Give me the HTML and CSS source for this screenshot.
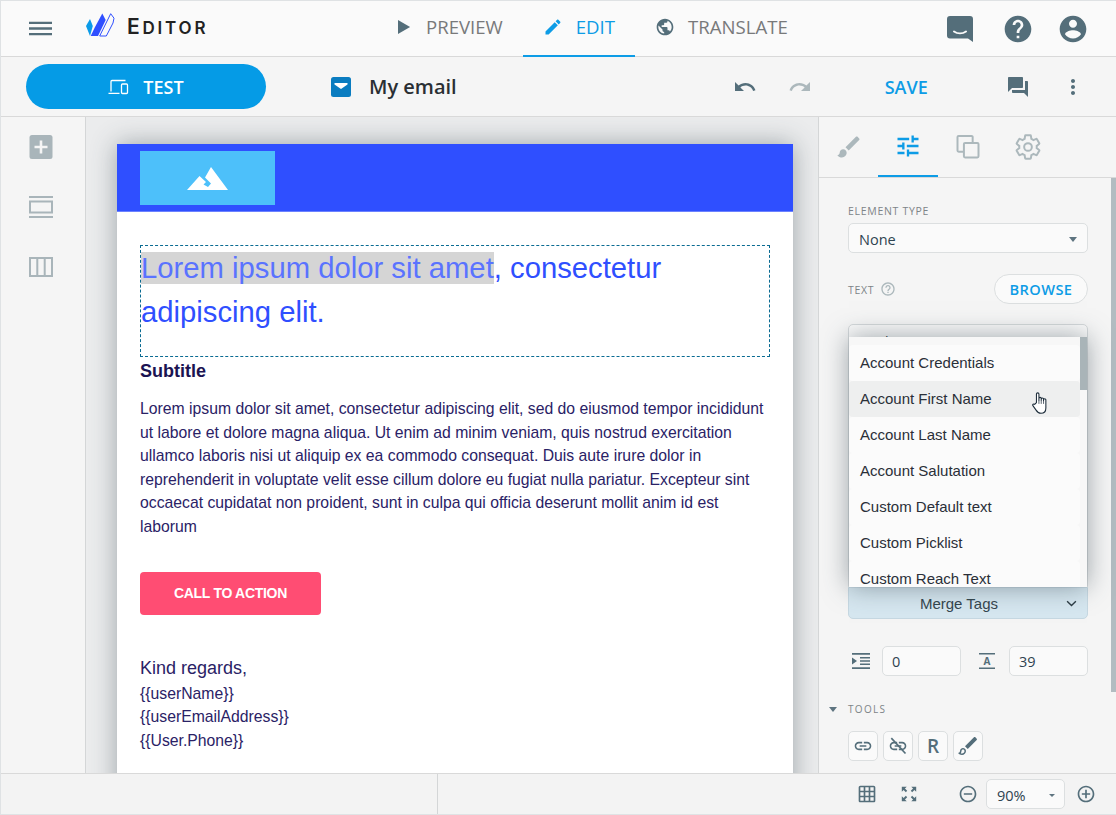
FILE: index.html
```html
<!DOCTYPE html>
<html lang="en">
<head>
<meta charset="utf-8">
<title>Editor</title>
<link rel="stylesheet" href="styles.css">
</head>
<body>
<div class="app">
  <header class="topbar">
    <div class="brand">
      <svg class="ic menu" viewBox="0 0 24 24"><path d="M0 19h24v-2.400H0zM0 13.200h24v-2.400H0zM0 5v2.400h24V5z"/></svg>
      <svg class="logo" viewBox="0 0 29 24"><path fill="#0a9be8" d="M0 13 4 6 6.800 13 4 23z"/><path fill="#2f4fff" d="M4.700 23 9 14 16.300 .5 19.700 7 12 23z"/><path fill="#fafafa" stroke="#2f4fff" d="M13.700 23 24.700 .7 28 5.200 27 10 20.300 23z"/></svg>
      <span class="logotext">Editor</span>
    </div>
    <nav class="tabs">
      <a class="tab"><svg class="ic i20" viewBox="0 0 24 24"><path d="M6 3.500v17l14.500-8.500z"/></svg>PREVIEW</a>
      <a class="tab active"><svg class="ic i20" viewBox="0 0 24 24"><path d="M3 17.250V21h3.750L17.810 9.940l-3.750-3.750L3 17.250zM20.710 7.040c.39-.39.39-1.020 0-1.410l-2.340-2.340c-.39-.39-1.020-.39-1.410 0l-1.830 1.830 3.750 3.750 1.830-1.830z"/></svg>EDIT</a>
      <a class="tab"><svg class="ic i20" viewBox="0 0 24 24"><path d="M12 2C6.480 2 2 6.480 2 12s4.480 10 10 10 10-4.480 10-10S17.520 2 12 2zm-1 17.930c-3.950-.49-7-3.850-7-7.930 0-.62.08-1.210.21-1.790L9 15v1c0 1.100.9 2 2 2v1.930zm6.900-2.540c-.26-.81-1-1.390-1.900-1.390h-1v-3c0-.55-.45-1-1-1H8v-2h2c.55 0 1-.45 1-1V7h2c1.100 0 2-.9 2-2v-.41c2.930 1.190 5 4.060 5 7.410 0 2.080-.8 3.970-2.100 5.390z"/></svg>TRANSLATE</a>
    </nav>
    <div class="topicons">
      <svg class="ic i27 chat" viewBox="0 0 26 27"><path d="M3 0h20a3 3 0 0 1 3 3v23l-5-3.500H3a3 3 0 0 1-3-3V3a3 3 0 0 1 3-3z"/><path fill="none" stroke="#fafafa" stroke-width="2" stroke-linecap="round" d="M7 15.500c3.500 2.400 8.500 2.400 12 0"/></svg>
      <svg class="ic i32" viewBox="0 0 24 24"><path d="M12 2C6.480 2 2 6.480 2 12s4.480 10 10 10 10-4.480 10-10S17.520 2 12 2zm1 17h-2v-2h2v2zm2.070-7.750l-.9.920C13.450 12.900 13 13.500 13 15h-2v-.5c0-1.100.45-2.100 1.170-2.830l1.240-1.260c.37-.36.59-.86.59-1.410 0-1.100-.9-2-2-2s-2 .9-2 2H8c0-2.210 1.790-4 4-4s4 1.790 4 4c0 .88-.36 1.680-.93 2.250z"/></svg>
      <svg class="ic i32" viewBox="0 0 24 24"><path d="M12 2C6.480 2 2 6.480 2 12s4.480 10 10 10 10-4.480 10-10S17.520 2 12 2zm0 3c1.660 0 3 1.340 3 3s-1.340 3-3 3-3-1.340-3-3 1.340-3 3-3zm0 14.200c-2.500 0-4.710-1.280-6-3.220.03-1.990 4-3.080 6-3.080 1.990 0 5.970 1.090 6 3.080-1.290 1.940-3.500 3.220-6 3.220z"/></svg>
    </div>
  </header>

  <div class="toolbar">
    <button class="testbtn"><svg class="devices" viewBox="0 0 20 16" fill="none" stroke="#fff" stroke-width="1.300"><path d="M2.500 12.500V2.500a1 1 0 0 1 1-1H17M0 14.300h11"/><rect x="13" y="5" width="6" height="9.500" rx="1"/></svg>TEST</button>
    <div class="docname">
      <svg class="mailic" viewBox="0 0 20 20"><rect width="20" height="20" rx="2.500" fill="#0a7cc0"/><path d="M3.500 6h13v1.500L10 12 3.500 7.500z" fill="#fff"/></svg>
      <span>My email</span>
    </div>
    <div class="actions">
      <svg class="ic i24 undo" viewBox="0 0 24 24"><path d="M12.500 8c-2.650 0-5.050.99-6.900 2.600L2 7v9h9l-3.620-3.620c1.390-1.160 3.160-1.880 5.120-1.880 3.540 0 6.550 2.310 7.600 5.500l2.370-.78C21.080 11.030 17.150 8 12.500 8z"/></svg>
      <svg class="ic i24 redo" viewBox="0 0 24 24"><path d="M18.400 10.600C16.550 8.990 14.150 8 11.500 8c-4.650 0-8.580 3.030-9.960 7.220L3.900 16c1.050-3.190 4.050-5.500 7.600-5.500 1.950 0 3.730.72 5.120 1.880L13 16h9V7l-3.600 3.600z"/></svg>
      <span class="save">SAVE</span>
      <svg class="ic i24 qa" viewBox="0 0 24 24"><path d="M21 6h-2v9H6v2c0 .55.45 1 1 1h11l4 4V7c0-.55-.45-1-1-1zm-4 6V3c0-.55-.45-1-1-1H3c-.55 0-1 .45-1 1v14l4-4h10c.55 0 1-.45 1-1z"/></svg>
      <svg class="ic i24 more" viewBox="0 0 24 24"><path d="M12 8c1.100 0 2-.9 2-2s-.9-2-2-2-2 .9-2 2 .9 2 2 2zm0 2c-1.100 0-2 .9-2 2s.9 2 2 2 2-.9 2-2-.9-2-2-2zm0 6c-1.100 0-2 .9-2 2s.9 2 2 2 2-.9 2-2-.9-2-2-2z"/></svg>
    </div>
  </div>

  <main class="workspace">
    <aside class="rail">
      <svg class="railic" viewBox="0 0 24 24"><rect x=".5" width="23" height="24" rx="2.500" fill="#a9b5ba"/><path d="M10.700 5.500h2.600v5.200h5.200v2.600h-5.200v5.200h-2.600v-5.200H5.500v-2.600h5.200z" fill="#f5f5f5"/></svg>
      <svg class="railic" viewBox="0 0 24 24"><path fill="#a9b5ba" d="M0 1h24v2H0zM0 21h24v2H0z"/><rect x="1" y="6.500" width="22" height="11" fill="none" stroke="#a9b5ba" stroke-width="2"/></svg>
      <svg class="railic" viewBox="0 0 24 24"><path fill="none" stroke="#a9b5ba" stroke-width="2" d="M1 3h22v18H1zM8.300 3v18M15.700 3v18"/></svg>
    </aside>

    <section class="canvas">
      <article class="email">
        <div class="emailhead">
          <div class="imgslot"><svg class="mount" viewBox="0 0 41 23"><path fill="#fff" d="M0 23 12.500 9l6.500 6-2.500 2.500L21 20 24 16.500 18 10.500 24 0l17 23z"/></svg></div>
        </div>
        <div class="emailbody">
          <h1 class="title"><span class="sel">Lorem ipsum dolor sit amet</span>, consectetur adipiscing elit.</h1>
          <h2 class="subtitle">Subtitle</h2>
          <p class="copy">Lorem ipsum dolor sit amet, consectetur adipiscing elit, sed do eiusmod tempor incididunt ut labore et dolore magna aliqua. Ut enim ad minim veniam, quis nostrud exercitation ullamco laboris nisi ut aliquip ex ea commodo consequat. Duis aute irure dolor in reprehenderit in voluptate velit esse cillum dolore eu fugiat nulla pariatur. Excepteur sint occaecat cupidatat non proident, sunt in culpa qui officia deserunt mollit anim id est laborum</p>
          <a class="cta">CALL TO ACTION</a>
          <p class="regards">Kind regards,</p>
          <p class="sig">{{userName}}<br>{{userEmailAddress}}<br>{{User.Phone}}</p>
        </div>
      </article>
    </section>

    <aside class="panel">
      <div class="ptabs">
        <div class="ptab"><svg class="ic i28 light" viewBox="0 0 24 24"><path d="M7 14c-1.660 0-3 1.340-3 3 0 1.310-1.160 2-2 2 .92 1.220 2.490 2 4 2 2.210 0 4-1.790 4-4 0-1.660-1.340-3-3-3zm13.710-9.370l-1.340-1.340c-.39-.39-1.020-.39-1.410 0L9 12.250 11.750 15l8.960-8.960c.39-.39.39-1.020 0-1.410z"/></svg></div>
        <div class="ptab on"><svg class="ic i28" viewBox="0 0 24 24"><path d="M3 17v2h6v-2H3zM3 5v2h10V5H3zm10 16v-2h8v-2h-8v-2h-2v6h2zM7 9v2H3v2h4v2h2V9H7zm14 4v-2H11v2h10zm-6-4h2V7h4V5h-4V3h-2v6z"/></svg></div>
        <div class="ptab"><svg class="ic i28 outline" viewBox="0 0 24 24"><path d="M16 8V3.500a1 1 0 0 0-1-1H4a1 1 0 0 0-1 1V15a1 1 0 0 0 1 1h4.500M8.500 9.500a1 1 0 0 1 1-1H20a1 1 0 0 1 1 1V20a1 1 0 0 1-1 1H9.500a1 1 0 0 1-1-1z"/></svg></div>
        <div class="ptab"><svg class="ic i28 outline" viewBox="0 0 24 24"><path d="M19.430 12.980c.04-.32.07-.64.07-.98s-.03-.66-.07-.98l2.110-1.650c.19-.15.24-.42.12-.64l-2-3.460c-.12-.22-.39-.3-.61-.22l-2.490 1c-.52-.4-1.080-.73-1.690-.98l-.38-2.650C14.460 2.180 14.250 2 14 2h-4c-.25 0-.46.18-.49.420l-.38 2.650c-.61.25-1.170.59-1.690.98l-2.490-1c-.23-.09-.49 0-.61.22l-2 3.460c-.13.22-.07.49.12.64l2.110 1.650c-.04.32-.07.65-.07.98s.03.66.07.98l-2.110 1.650c-.19.15-.24.42-.12.64l2 3.460c.12.22.39.3.61.22l2.490-1c.52.4 1.080.73 1.690.98l.38 2.650c.03.24.24.42.49.42h4c.25 0 .46-.18.49-.42l.38-2.650c.61-.25 1.170-.59 1.690-.98l2.490 1c.23.09.49 0 .61-.22l2-3.460c.12-.22.07-.49-.12-.64z"/><circle cx="12" cy="12" r="3.300"/></svg></div>
      </div>
      <div class="pbody">
        <label class="lbl first">ELEMENT TYPE</label>
        <div class="field select"><span>None</span><i class="caret"></i></div>
        <div class="textrow">
          <label class="lbl">TEXT</label>
          <svg class="hint" viewBox="0 0 24 24"><path fill="#acb8bc" d="M11 18h2v-2h-2v2zm1-16C6.480 2 2 6.480 2 12s4.480 10 10 10 10-4.480 10-10S17.520 2 12 2zm0 18c-4.410 0-8-3.590-8-8s3.590-8 8-8 8 3.590 8 8-3.590 8-8 8zm0-14c-2.210 0-4 1.790-4 4h2c0-1.100.9-2 2-2s2 .9 2 2c0 2-3 1.750-3 5h2c0-2.250 3-2.500 3-5 0-2.210-1.790-4-4-4z"/></svg>
          <button class="browse">BROWSE</button>
        </div>
        <div class="editorarea"><span class="fontname">Arial</span></div>
        <div class="merge"><span>Merge Tags</span><svg class="chev" viewBox="0 0 12 8"><path fill="none" stroke="#2c3c44" stroke-width="1.600" d="M1 1.300l5 5 5-5"/></svg></div>
        <div class="metrics">
          <svg class="ic i20" viewBox="0 0 20 20"><path d="M1 2h18v1.700H1zM1 16.300h18v1.700H1zM9 6h10v1.500H9zM9 9.300h10v1.500H9zM9 12.500h10v1.500H9zM1 6.500 6 10 1 13.500z"/></svg>
          <div class="field num">0</div>
          <svg class="ic i20 gapl" viewBox="0 0 20 20"><path d="M2 2h16v1.500H2zM2 16.500h16V18H2z"/><text x="10" y="14" text-anchor="middle" class="atext">A</text></svg>
          <div class="field num">39</div>
        </div>
        <div class="toolshead"><i class="caret tcaret"></i><label class="lbl tools">TOOLS</label></div>
        <div class="toolbtns">
          <div class="tbtn"><svg class="ic i20" viewBox="0 0 24 24"><path d="M3.900 12c0-1.710 1.390-3.100 3.100-3.100h4V7H7c-2.760 0-5 2.240-5 5s2.240 5 5 5h4v-1.900H7c-1.710 0-3.100-1.390-3.100-3.100zM8 13h8v-2H8v2zm9-6h-4v1.900h4c1.710 0 3.100 1.390 3.100 3.100s-1.390 3.100-3.100 3.100h-4V17h4c2.760 0 5-2.240 5-5s-2.240-5-5-5z"/></svg></div>
          <div class="tbtn"><svg class="ic i20" viewBox="0 0 24 24"><path d="M3.900 12c0-1.710 1.390-3.100 3.100-3.100h4V7H7c-2.760 0-5 2.240-5 5s2.240 5 5 5h4v-1.900H7c-1.710 0-3.100-1.390-3.100-3.100zM8 13h8v-2H8v2zm9-6h-4v1.900h4c1.710 0 3.100 1.390 3.100 3.100s-1.390 3.100-3.100 3.100h-4V17h4c2.760 0 5-2.240 5-5s-2.240-5-5-5z"/><path d="M4 2.500 21 21" stroke="#546e7a" stroke-width="2"/></svg></div>
          <div class="tbtn letter">R</div>
          <div class="tbtn"><svg class="ic i24" viewBox="0 0 24 24"><path d="M7 14c-1.660 0-3 1.340-3 3 0 1.310-1.160 2-2 2 .92 1.220 2.490 2 4 2 2.210 0 4-1.790 4-4 0-1.660-1.340-3-3-3zm0 1.500c.83 0 1.500.67 1.500 1.500 0 1.400-1.100 2.500-2.500 2.500-.4 0-.8-.1-1.200-.2.4-.6.700-1.400.700-2.300 0-.83.670-1.500 1.500-1.500zm13.710-10.870l-1.340-1.340c-.39-.39-1.020-.39-1.410 0L9 12.250 11.750 15l8.960-8.960c.39-.39.39-1.020 0-1.410z"/></svg></div>
        </div>
      </div>
      <div class="pscroll"></div>
      <div class="menu-pop">
        <ul class="menu-list">
          <li>Account Credentials</li>
          <li class="hover">Account First Name</li>
          <li>Account Last Name</li>
          <li>Account Salutation</li>
          <li>Custom Default text</li>
          <li>Custom Picklist</li>
          <li>Custom Reach Text</li>
        </ul>
        <div class="menu-thumb"></div>
        <svg class="hand" viewBox="0 0 18 25"><path fill="#fff" stroke="#1c2c3a" stroke-width="1.200" stroke-linejoin="round" d="M5 12V2.500a1.400 1.400 0 0 1 2.800 0V9.500l0-2a1.300 1.300 0 0 1 2.600 0v2l0-1.300a1.300 1.300 0 0 1 2.600 0v1.600l0-.8a1.300 1.300 0 0 1 2.600 0V18c0 3-1.500 6-5.500 6-3 0-4-1-5.500-3.500L1 15.500c-.7-1.200.8-2.500 2-1.500z"/><path stroke="#1c2c3a" stroke-width=".8" d="M7.800 9.500v4M10.400 9.500v4M13 9.500v4"/></svg>
      </div>
    </aside>
  </main>

  <footer class="statusbar">
    <div class="statusleft"></div>
    <div class="statusright">
      <svg class="ic i20" viewBox="0 0 24 24"><path d="M20 2H4c-1.100 0-2 .9-2 2v16c0 1.100.9 2 2 2h16c1.100 0 2-.9 2-2V4c0-1.100-.9-2-2-2zM8 20H4v-4h4v4zm0-6H4v-4h4v4zm0-6H4V4h4v4zm6 12h-4v-4h4v4zm0-6h-4v-4h4v4zm0-6h-4V4h4v4zm6 12h-4v-4h4v4zm0-6h-4v-4h4v4zm0-6h-4V4h4v4z"/></svg>
      <svg class="ic i20 expand" viewBox="0 0 20 20"><path d="M2 2h5.500L5.500 4 8 6.500 6.500 8 4 5.500 2 7.500zM18 2v5.500L16 5.500 13.500 8 12 6.500 14.500 4 12.500 2zM2 18v-5.500l2 2L6.500 12 8 13.500 5.500 16l2 2zM18 18h-5.500l2-2L12 13.500 13.500 12l2.500 2.500 2-2z"/></svg>
      <svg class="ic i20 zoomout" viewBox="0 0 24 24"><path d="M7 11v2h10v-2H7zm5-9C6.480 2 2 6.480 2 12s4.480 10 10 10 10-4.480 10-10S17.520 2 12 2zm0 18c-4.410 0-8-3.590-8-8s3.590-8 8-8 8 3.590 8 8-3.590 8-8 8z"/></svg>
      <div class="field zoomsel"><span>90%</span><i class="caret small"></i></div>
      <svg class="ic i20" viewBox="0 0 24 24"><path d="M13 7h-2v4H7v2h4v4h2v-4h4v-2h-4V7zm-1-5C6.480 2 2 6.480 2 12s4.480 10 10 10 10-4.480 10-10S17.520 2 12 2zm0 18c-4.410 0-8-3.590-8-8s3.590-8 8-8 8 3.590 8 8-3.590 8-8 8z"/></svg>
    </div>
  </footer>
</div>
</body>
</html>
```

FILE: styles.css
```css
* { box-sizing: border-box; }
html, body { margin: 0; padding: 0; overflow: hidden; }
body { font-family: "Open Sans", sans-serif; color: #263238; background: #f5f5f5; }
.app { width: 1116px; height: 815px; display: flex; flex-direction: column; border: 1px solid #dfe2e4; border-right: 0; overflow: hidden; }
.ic { fill: #546e7a; flex: none; display: block; }
.i20 { width: 20px; height: 20px; }
.i24 { width: 24px; height: 24px; }
.i27 { width: 26px; height: 27px; }
.i28 { width: 28px; height: 28px; }
.i32 { width: 32px; height: 32px; }

/* top bar */
.topbar { height: 56px; flex: none; display: grid; grid-template-columns: 372px auto 1fr; background: #fafafa; border-bottom: 1px solid #d9d9d9; }
.brand { display: flex; align-items: center; padding: 0 0 2px 28px; }
.menu { width: 23px; height: 23px; }
.logo { width: 29px; height: 24px; margin: 0 0 7px 34px; }
.logotext { display: inline-block; margin: 0 0 4px 12px; font-family: "Inter", sans-serif; font-weight: 600; font-size: 17px; text-transform: uppercase; letter-spacing: 2.800px; color: #222; }
.logotext::first-letter { font-size: 21px; }
.tabs { display: flex; }
.tab { display: flex; align-items: center; gap: 13px; padding: 0 20px 3px; font-size: 18.600px; font-weight: 400; color: #78797a; border-bottom: 2px solid transparent; height: 56px; }
.tab .ic { fill: #546e7a; }
.tab.active { color: #0d9ce6; border-bottom-color: #0d9ce6; font-weight: 500; }
.tab.active .ic { fill: #0d9ce6; }
.topicons { display: flex; justify-content: flex-end; align-items: center; gap: 23px; padding-right: 27px; }
.chat { margin-right: 6px; }

/* toolbar */
.toolbar { height: 60px; flex: none; display: flex; align-items: center; background: #f5f5f5; border-bottom: 1px solid #d9d9d9; padding-left: 25px; }
.testbtn { width: 240px; height: 45px; border: 0; border-radius: 23px; background: #059be6; color: #fff; font: 600 18px "Open Sans", sans-serif; display: flex; align-items: center; justify-content: center; gap: 14px; }
.devices { width: 21px; height: 16px; }
.docname { display: flex; align-items: center; margin-left: 65px; gap: 18px; font-size: 20px; font-weight: 600; color: #2a2f33; }
.mailic { width: 20px; height: 20px; }
.actions { display: flex; align-items: center; margin-left: 276px; }
.redo { fill: #acb8bc; margin-left: 31px; }
.save { margin-left: 73px; font-size: 18px; font-weight: 600; color: #0d9ce6; }
.qa { margin-left: 78px; }
.more { margin-left: 31px; }

/* workspace */
.workspace { flex: 1; min-height: 0; display: flex; }
.rail { width: 85px; flex: none; background: #f5f5f5; border-right: 1px solid #d4d6d7; display: flex; flex-direction: column; align-items: center; gap: 36px; padding-top: 18px; padding-right: 5px; }
.railic { width: 24px; height: 24px; }
.canvas { flex: 1; min-width: 0; overflow: hidden; background: #ebeced; padding: 27px 0 0 31px; }
.email { width: 676px; height: 800px; background: #fff; box-shadow: 0 0 24px rgba(60, 75, 85, .45); }
.emailhead { height: 68px; background: #2f4fff; padding: 7px 0 0 23px; border-bottom: 1px solid #6c82ff; }
.imgslot { width: 135px; height: 54px; background: #4dc0fa; display: flex; align-items: center; justify-content: center; }
.mount { width: 41px; height: 23px; }
.emailbody { padding: 33px 23px 0; font-family: "Liberation Sans", Arial, sans-serif; color: #2a2266; }
.title { margin: 0; height: 112px; width: 630px; border: 1px dashed #0a6b92; font-weight: 400; font-size: 29.250px; line-height: 44px; color: #2f4fff; }
.sel { background: #d5d5d5; color: #5a73ff; }
.subtitle { margin: 2px 0 0; font-size: 18px; line-height: 24px; font-weight: 700; color: #1b1352; }
.copy { margin: 14px 0 0; width: 630px; font-size: 15.750px; line-height: 23.600px; }
.cta { display: flex; align-items: center; justify-content: center; margin-top: 33px; width: 181px; height: 43px; border-radius: 4px; background: #ff4d73; color: #fff; font-size: 14px; font-weight: 700; letter-spacing: -.3px; }
.regards { margin: 41px 0 0; font-size: 18px; line-height: 24px; }
.sig { margin: 2px 0 0; font-size: 15.750px; line-height: 23.600px; }

/* right panel */
.panel { width: 298px; flex: none; position: relative; overflow: hidden; background: #f5f5f5; border-left: 1px solid #d4d6d7; }
.ptabs { height: 61px; display: flex; border-bottom: 1px solid #d9d9d9; }
.ptab { width: 60px; height: 60px; display: flex; align-items: center; justify-content: center; }
.ptab:first-child { width: 59px; }
.ptab.on { border-bottom: 2px solid #0d9ce6; }
.ptab.on .ic { fill: #0d9ce6; }
.light { fill: #acb8bc; }
.outline { fill: none; stroke: #acb8bc; stroke-width: 1.700; }
.pbody { padding: 0 28px 0 29px; }
.lbl { display: block; font-size: 10.500px; letter-spacing: .7px; color: #7d8487; line-height: 14px; }
.first { margin-top: 26px; }
.field { background: #fafafa; border: 1px solid #dcdfe0; border-radius: 5px; font-size: 14.500px; color: #2f4350; }
.select { margin-top: 5px; height: 30px; display: flex; align-items: center; justify-content: space-between; padding: 2px 10px 0; }
.caret { width: 0; height: 0; border-left: 4.500px solid transparent; border-right: 4.500px solid transparent; border-top: 5px solid #5e7480; }
.textrow { display: flex; align-items: center; height: 30px; margin-top: 21px; }
.textrow .lbl { padding-top: 2px; }
.hint { width: 16px; height: 16px; margin-left: 6px; }
.browse { margin-left: auto; width: 94px; height: 30px; border: 1px solid #dcdfe0; border-radius: 15px; background: #fafafa; color: #0d9ce6; font: 600 14.600px "Open Sans", sans-serif; letter-spacing: .4px; padding: 0; }
.editorarea { margin-top: 20px; height: 263px; border: 1px solid #d4d8da; border-radius: 5px 5px 0 0; background: #fafafa; padding: 7px 10px; font-size: 14px; }
.merge { height: 32px; display: flex; align-items: center; justify-content: center; padding-right: 18px; position: relative; background: #d6e7f0; border: 1px solid #c6d8e2; border-radius: 0 0 5px 5px; font-family: "Liberation Sans", Arial, sans-serif; font-size: 15px; color: #34454e; }
.chev { position: absolute; right: 10px; top: 12px; width: 11px; height: 7px; }
.metrics { display: flex; align-items: center; margin-top: 27px; padding-left: 3px; }
.num { width: 79px; height: 30px; display: flex; align-items: center; padding-left: 9px; margin-left: 11px; }
.gapl { margin-left: 16px; }
.metrics .num:last-child { margin-left: 12px; }
.atext { font: 700 10px "Open Sans", sans-serif; fill: #546e7a; }
.toolshead { position: relative; margin-top: 26px; }
.tools { letter-spacing: 1.300px; font-size: 10px; }
.tcaret { position: absolute; left: -19px; top: 5px; }
.toolbtns { display: flex; gap: 5px; margin-top: 15px; }
.tbtn { width: 30px; height: 30px; background: #fafafa; border: 1px solid #dcdfe0; border-radius: 5px; display: flex; align-items: center; justify-content: center; }
.letter { font-size: 19px; font-weight: 600; color: #546e7a; }
.pscroll { position: absolute; right: 0; top: 61px; width: 5px; height: 514px; background: #b2bcc1; }

/* merge tag menu */
.menu-pop { position: absolute; left: 30px; top: 220px; width: 238px; height: 250px; background: #f7f7f7; box-shadow: 0 0 24px rgba(60, 75, 85, .5); overflow: hidden; }
.menu-list { list-style: none; margin: 0; padding: 8px 0 0; width: 231px; font-family: "Liberation Sans", Arial, sans-serif; font-size: 15px; color: #2a2f38; }
.menu-list li { height: 36px; line-height: 36px; padding-left: 11px; background: #fbfbfb; border-radius: 4px; }
.menu-list .hover { background: #eeefef; }
.menu-thumb { position: absolute; right: 0; top: 0; width: 7px; height: 53px; background: #a9b4b8; }
.hand { position: absolute; left: 183px; top: 54px; width: 16px; height: 24px; }

/* status bar */
.statusbar { height: 41px; flex: none; display: flex; background: #f3f3f3; border-top: 1px solid #d9d9d9; }
.statusleft { width: 437px; flex: none; border-right: 1px solid #d4d6d7; }
.statusright { flex: 1; display: flex; align-items: center; padding-left: 419px; }
.expand { margin-left: 23px; width: 18px; height: 18px; }
.zoomout { margin-left: 40px; }
.zoomsel { width: 79px; height: 30px; margin-left: 8px; display: flex; align-items: center; justify-content: space-between; padding: 2px 9px 0 10px; margin-right: 11px; }
.small { border-left-width: 3px; border-right-width: 3px; border-top-width: 3.500px; }
```
